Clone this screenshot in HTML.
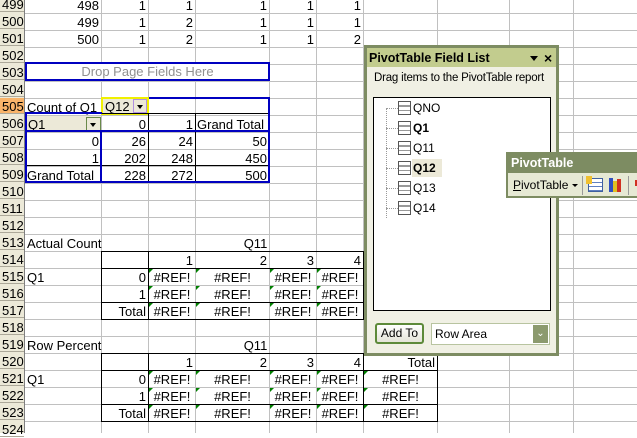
<!DOCTYPE html>
<html><head><meta charset="utf-8">
<style>
*{margin:0;padding:0;box-sizing:border-box}
body{width:637px;height:433px;overflow:hidden;background:#fff;font-family:"Liberation Sans",Arial,sans-serif;font-size:13px;position:relative}
.grid{position:absolute;left:0;top:-3px;width:637px;height:440px;background:repeating-linear-gradient(to bottom,transparent 0 16px,#c0c0c0 16px 17px)}
.v{position:absolute;top:0;width:1px;height:433px;background:#c0c0c0}
.rh{position:absolute;left:0;top:0;width:25px;height:433px;background:#ece9d8;border-right:1px solid #808080}
.rn{position:absolute;left:0;width:24px;height:16px;line-height:17px;padding-left:2px;font-size:13px;border-bottom:1px solid #aca899}
.c{position:absolute;height:16px;line-height:17px;white-space:nowrap;overflow:hidden}
.r{text-align:right;padding-right:2px}
.m{text-align:center}
.l{padding-left:2px}
.ref{position:absolute;height:16px;line-height:17px;text-align:center}
.ref:before{content:"";position:absolute;left:0;top:0;border-top:4px solid #008000;border-right:4px solid transparent}
.bl{position:absolute;background:#0000c0}
.k{position:absolute;background:#000}
</style></head><body>
<div class="grid"></div>
<div class="v" style="left:101px"></div><div class="v" style="left:148px"></div><div class="v" style="left:195px"></div><div class="v" style="left:269px"></div><div class="v" style="left:316px"></div><div class="v" style="left:363px"></div><div class="v" style="left:437px"></div><div class="v" style="left:509px"></div><div class="v" style="left:573px"></div>
<div class="rh">
<div class="rn" style="top:-4px">499</div><div class="rn" style="top:13px">500</div><div class="rn" style="top:30px">501</div><div class="rn" style="top:47px">502</div><div class="rn" style="top:64px">503</div><div class="rn" style="top:81px">504</div><div class="rn" style="top:98px;background:#f9b46a">505</div><div class="rn" style="top:115px">506</div><div class="rn" style="top:132px">507</div><div class="rn" style="top:149px">508</div><div class="rn" style="top:166px">509</div><div class="rn" style="top:183px">510</div><div class="rn" style="top:200px">511</div><div class="rn" style="top:217px">512</div><div class="rn" style="top:234px">513</div><div class="rn" style="top:251px">514</div><div class="rn" style="top:268px">515</div><div class="rn" style="top:285px">516</div><div class="rn" style="top:302px">517</div><div class="rn" style="top:319px">518</div><div class="rn" style="top:336px">519</div><div class="rn" style="top:353px">520</div><div class="rn" style="top:370px">521</div><div class="rn" style="top:387px">522</div><div class="rn" style="top:404px">523</div><div class="rn" style="top:421px">524</div>
</div>

<div class="c r" style="left:25px;width:76px;top:-3px">498</div><div class="c r" style="left:101px;width:47px;top:-3px">1</div><div class="c r" style="left:148px;width:47px;top:-3px">1</div><div class="c r" style="left:195px;width:74px;top:-3px">1</div><div class="c r" style="left:269px;width:47px;top:-3px">1</div><div class="c r" style="left:316px;width:47px;top:-3px">1</div>
<div class="c r" style="left:25px;width:76px;top:14px">499</div><div class="c r" style="left:101px;width:47px;top:14px">1</div><div class="c r" style="left:148px;width:47px;top:14px">2</div><div class="c r" style="left:195px;width:74px;top:14px">1</div><div class="c r" style="left:269px;width:47px;top:14px">1</div><div class="c r" style="left:316px;width:47px;top:14px">1</div>
<div class="c r" style="left:25px;width:76px;top:31px">500</div><div class="c r" style="left:101px;width:47px;top:31px">1</div><div class="c r" style="left:148px;width:47px;top:31px">2</div><div class="c r" style="left:195px;width:74px;top:31px">1</div><div class="c r" style="left:269px;width:47px;top:31px">1</div><div class="c r" style="left:316px;width:47px;top:31px">2</div>

<div style="position:absolute;left:25px;top:62px;width:245px;height:19px;border:2px solid #0000c0;background:#fff;color:#909090;text-align:center;line-height:15px">Drop Page Fields Here</div>

<div class="c l" style="left:25px;width:76px;top:99px">Count of Q1</div>
<div style="position:absolute;left:101px;top:97px;width:48px;height:18px;border:2px solid #f0f000"></div>
<div class="c l" style="left:103px;width:30px;top:99px;height:14px;background:#ece9d8;line-height:15px">Q12</div>
<div style="position:absolute;left:133px;top:99px;width:14px;height:14px;background:#ece9d8;border:1px solid #b090e0"><div style="position:absolute;left:3px;top:5px;border-top:4px solid #000;border-left:3.5px solid transparent;border-right:3.5px solid transparent"></div></div>
<div class="c l" style="left:26px;width:75px;top:116px;background:#ece9d8">Q1</div>
<div style="position:absolute;left:86px;top:117px;width:15px;height:14px;background:#ece9d8;border:1px solid #6a8a4a"><div style="position:absolute;left:3px;top:5px;border-top:4px solid #000;border-left:3.5px solid transparent;border-right:3.5px solid transparent"></div></div>
<div class="c r" style="left:101px;width:47px;top:116px">0</div><div class="c r" style="left:148px;width:47px;top:116px">1</div><div class="c l" style="left:195px;width:74px;top:116px">Grand Total</div>
<div class="c r" style="left:25px;width:76px;top:133px">0</div><div class="c r" style="left:101px;width:47px;top:133px">26</div><div class="c r" style="left:148px;width:47px;top:133px">24</div><div class="c r" style="left:195px;width:74px;top:133px">50</div>
<div class="c r" style="left:25px;width:76px;top:150px">1</div><div class="c r" style="left:101px;width:47px;top:150px">202</div><div class="c r" style="left:148px;width:47px;top:150px">248</div><div class="c r" style="left:195px;width:74px;top:150px">450</div>
<div class="c l" style="left:25px;width:76px;top:167px">Grand Total</div><div class="c r" style="left:101px;width:47px;top:167px">228</div><div class="c r" style="left:148px;width:47px;top:167px">272</div><div class="c r" style="left:195px;width:74px;top:167px">500</div>
<div class="k" style="left:148px;top:113px;width:1px;height:69px"></div>
<div class="k" style="left:195px;top:113px;width:1px;height:69px"></div>
<div class="k" style="left:25px;top:165px;width:244px;height:1px"></div>
<div class="k" style="left:101px;top:113px;width:168px;height:1px"></div>
<div class="bl" style="left:149px;top:97px;width:121px;height:2px"></div>
<div class="bl" style="left:268px;top:97px;width:2px;height:86px"></div>
<div class="bl" style="left:25px;top:112px;width:77px;height:2px"></div>
<div class="bl" style="left:25px;top:112px;width:2px;height:71px"></div>
<div class="bl" style="left:25px;top:130px;width:245px;height:2px"></div>
<div class="bl" style="left:100px;top:130px;width:2px;height:53px"></div>
<div class="bl" style="left:25px;top:181px;width:245px;height:2px"></div>

<div class="c l" style="left:25px;width:120px;top:235px">Actual Count</div>
<div class="c m" style="left:148px;width:215px;top:235px">Q11</div>
<div class="k" style="left:101px;top:251px;width:263px;height:1px"></div>
<div class="k" style="left:101px;top:268px;width:263px;height:1px"></div>
<div class="k" style="left:101px;top:302px;width:263px;height:1px"></div>
<div class="k" style="left:101px;top:319px;width:263px;height:1px"></div>
<div class="k" style="left:101px;top:251px;width:1px;height:69px"></div>
<div class="k" style="left:148px;top:251px;width:1px;height:69px"></div>
<div class="k" style="left:363px;top:251px;width:1px;height:69px"></div>
<div class="c r" style="left:148px;width:47px;top:252px">1</div><div class="c r" style="left:195px;width:74px;top:252px">2</div><div class="c r" style="left:269px;width:47px;top:252px">3</div><div class="c r" style="left:316px;width:47px;top:252px">4</div>
<div class="c l" style="left:25px;width:70px;top:269px">Q1</div>
<div class="c r" style="left:101px;width:47px;top:269px">0</div><div class="c r" style="left:101px;width:47px;top:286px">1</div><div class="c r" style="left:101px;width:47px;top:303px">Total</div>
<div class="ref" style="left:149px;width:46px;top:269px">#REF!</div><div class="ref" style="left:196px;width:73px;top:269px">#REF!</div><div class="ref" style="left:270px;width:46px;top:269px">#REF!</div><div class="ref" style="left:317px;width:46px;top:269px">#REF!</div>
<div class="ref" style="left:149px;width:46px;top:286px">#REF!</div><div class="ref" style="left:196px;width:73px;top:286px">#REF!</div><div class="ref" style="left:270px;width:46px;top:286px">#REF!</div><div class="ref" style="left:317px;width:46px;top:286px">#REF!</div>
<div class="ref" style="left:149px;width:46px;top:303px">#REF!</div><div class="ref" style="left:196px;width:73px;top:303px">#REF!</div><div class="ref" style="left:270px;width:46px;top:303px">#REF!</div><div class="ref" style="left:317px;width:46px;top:303px">#REF!</div>

<div class="c l" style="left:25px;width:120px;top:337px">Row Percent</div>
<div class="c m" style="left:148px;width:215px;top:337px">Q11</div>
<div class="k" style="left:101px;top:353px;width:337px;height:1px"></div>
<div class="k" style="left:101px;top:370px;width:337px;height:1px"></div>
<div class="k" style="left:101px;top:404px;width:337px;height:1px"></div>
<div class="k" style="left:101px;top:421px;width:337px;height:1px"></div>
<div class="k" style="left:101px;top:353px;width:1px;height:69px"></div>
<div class="k" style="left:148px;top:353px;width:1px;height:69px"></div>
<div class="k" style="left:363px;top:353px;width:1px;height:69px"></div>
<div class="k" style="left:437px;top:353px;width:1px;height:69px"></div>
<div class="c r" style="left:148px;width:47px;top:354px">1</div><div class="c r" style="left:195px;width:74px;top:354px">2</div><div class="c r" style="left:269px;width:47px;top:354px">3</div><div class="c r" style="left:316px;width:47px;top:354px">4</div><div class="c r" style="left:363px;width:74px;top:354px">Total</div>
<div class="c l" style="left:25px;width:70px;top:371px">Q1</div>
<div class="c r" style="left:101px;width:47px;top:371px">0</div><div class="c r" style="left:101px;width:47px;top:388px">1</div><div class="c r" style="left:101px;width:47px;top:405px">Total</div>
<div class="ref" style="left:149px;width:46px;top:371px">#REF!</div><div class="ref" style="left:196px;width:73px;top:371px">#REF!</div><div class="ref" style="left:270px;width:46px;top:371px">#REF!</div><div class="ref" style="left:317px;width:46px;top:371px">#REF!</div><div class="ref" style="left:364px;width:73px;top:371px">#REF!</div>
<div class="ref" style="left:149px;width:46px;top:388px">#REF!</div><div class="ref" style="left:196px;width:73px;top:388px">#REF!</div><div class="ref" style="left:270px;width:46px;top:388px">#REF!</div><div class="ref" style="left:317px;width:46px;top:388px">#REF!</div><div class="ref" style="left:364px;width:73px;top:388px">#REF!</div>
<div class="ref" style="left:149px;width:46px;top:405px">#REF!</div><div class="ref" style="left:196px;width:73px;top:405px">#REF!</div><div class="ref" style="left:270px;width:46px;top:405px">#REF!</div><div class="ref" style="left:317px;width:46px;top:405px">#REF!</div><div class="ref" style="left:364px;width:73px;top:405px">#REF!</div>

<div style="position:absolute;left:364px;top:45px;width:195px;height:311px;background:#f0f0e4;border:3px solid #7d8c62">
  <div style="position:absolute;left:0;top:0;width:189px;height:19px;background:#c2cc8e;font-weight:bold;font-size:12.5px;line-height:20px;padding-left:2px;white-space:nowrap">PivotTable Field List</div>
  <div style="position:absolute;left:163px;top:8px;border-top:5px solid #000;border-left:4.5px solid transparent;border-right:4.5px solid transparent"></div>
  <div style="position:absolute;left:177px;top:1px;font-size:14px;font-weight:bold;line-height:18px">×</div>
  <div style="position:absolute;left:7px;top:22px;font-size:11.5px;line-height:16px;white-space:nowrap;letter-spacing:-0.2px">Drag items to the PivotTable report</div>
  <div style="position:absolute;left:6px;top:49px;width:178px;height:214px;background:#fff;border:1px solid #000">
    <div style="position:absolute;left:12px;top:10px;width:1px;height:110px;border-left:1px dotted #999"></div>
    <div style="position:absolute;left:12px;top:10px;width:12px;border-top:1px dotted #999"></div>
    <div style="position:absolute;left:12px;top:30px;width:12px;border-top:1px dotted #999"></div>
    <div style="position:absolute;left:12px;top:50px;width:12px;border-top:1px dotted #999"></div>
    <div style="position:absolute;left:12px;top:70px;width:12px;border-top:1px dotted #999"></div>
    <div style="position:absolute;left:12px;top:90px;width:12px;border-top:1px dotted #999"></div>
    <div style="position:absolute;left:12px;top:110px;width:12px;border-top:1px dotted #999"></div>
    <div style="position:absolute;left:24px;top:3px;width:13px;height:14px;border:1px solid #555;background:linear-gradient(#fff 0 3px,#999 3px 5px,#fff 5px 8px,#999 8px 9px,#fff 9px)"></div>
    <div style="position:absolute;left:24px;top:23px;width:13px;height:14px;border:1px solid #555;background:linear-gradient(#fff 0 3px,#999 3px 5px,#fff 5px 8px,#999 8px 9px,#fff 9px)"></div>
    <div style="position:absolute;left:24px;top:43px;width:13px;height:14px;border:1px solid #555;background:linear-gradient(#fff 0 3px,#999 3px 5px,#fff 5px 8px,#999 8px 9px,#fff 9px)"></div>
    <div style="position:absolute;left:24px;top:63px;width:13px;height:14px;border:1px solid #555;background:linear-gradient(#fff 0 3px,#999 3px 5px,#fff 5px 8px,#999 8px 9px,#fff 9px)"></div>
    <div style="position:absolute;left:24px;top:83px;width:13px;height:14px;border:1px solid #555;background:linear-gradient(#fff 0 3px,#999 3px 5px,#fff 5px 8px,#999 8px 9px,#fff 9px)"></div>
    <div style="position:absolute;left:24px;top:103px;width:13px;height:14px;border:1px solid #555;background:linear-gradient(#fff 0 3px,#999 3px 5px,#fff 5px 8px,#999 8px 9px,#fff 9px)"></div>
    <div style="position:absolute;left:39px;top:2px;font-size:12px;line-height:16px">QNO</div>
    <div style="position:absolute;left:39px;top:22px;font-size:12px;line-height:16px;font-weight:bold">Q1</div>
    <div style="position:absolute;left:39px;top:42px;font-size:12px;line-height:16px">Q11</div>
    <div style="position:absolute;left:38px;top:61px;font-size:12px;line-height:18px;font-weight:bold;background:#ece9d8;padding:0 6px 0 1px">Q12</div>
    <div style="position:absolute;left:39px;top:82px;font-size:12px;line-height:16px">Q13</div>
    <div style="position:absolute;left:39px;top:102px;font-size:12px;line-height:16px">Q14</div>
  </div>
  <div style="position:absolute;left:8px;top:275px;width:49px;height:21px;border:2px solid #5d8a3a;border-radius:3px;background:linear-gradient(#fff,#e4e4d8);font-size:12px;line-height:17px;text-align:center">Add To</div>
  <div style="position:absolute;left:64px;top:275px;width:119px;height:22px;border:1px solid #b8c4a0;background:#fff;font-size:12px;line-height:20px;padding-left:3px">Row Area
    <div style="position:absolute;right:1px;top:1px;width:15px;height:18px;background:#8c9a6e;color:#fff;font-size:10px;text-align:center;line-height:18px">&#8964;</div>
  </div>
</div>

<div style="position:absolute;left:506px;top:152px;width:140px;height:46px;background:#e6e9d4;border:2px solid #7d8c62;border-right:none">
  <div style="position:absolute;left:0;top:0;width:140px;height:19px;background:#7d8c62;color:#fff;font-weight:bold;font-size:12.5px;line-height:19px;padding-left:3px">PivotTable</div>
  <div style="position:absolute;left:5px;top:23px;font-size:12px;line-height:16px"><u>P</u>ivotTable</div>
  <div style="position:absolute;left:64px;top:30px;border-top:3px solid #000;border-left:3px solid transparent;border-right:3px solid transparent"></div>
  <div style="position:absolute;left:74px;top:22px;width:1px;height:19px;background:#999"></div>
  <div style="position:absolute;left:80px;top:24px;width:15px;height:14px;border:1px solid #4060a0;background:repeating-linear-gradient(#fff 0 3px,#6080c0 3px 4px)"></div>
  <div style="position:absolute;left:78px;top:22px;width:6px;height:8px;background:#f0c030"></div>
  <div style="position:absolute;left:101px;top:24px;width:4px;height:14px;background:#3050c0"></div>
  <div style="position:absolute;left:105px;top:27px;width:4px;height:11px;background:#e0c020"></div>
  <div style="position:absolute;left:109px;top:25px;width:4px;height:13px;background:#d03020"></div>
  <div style="position:absolute;left:120px;top:22px;width:1px;height:19px;background:#999"></div>
  <div style="position:absolute;left:127px;top:26px;width:4px;height:6px;background:#d03020"></div>
</div>
</body></html>
